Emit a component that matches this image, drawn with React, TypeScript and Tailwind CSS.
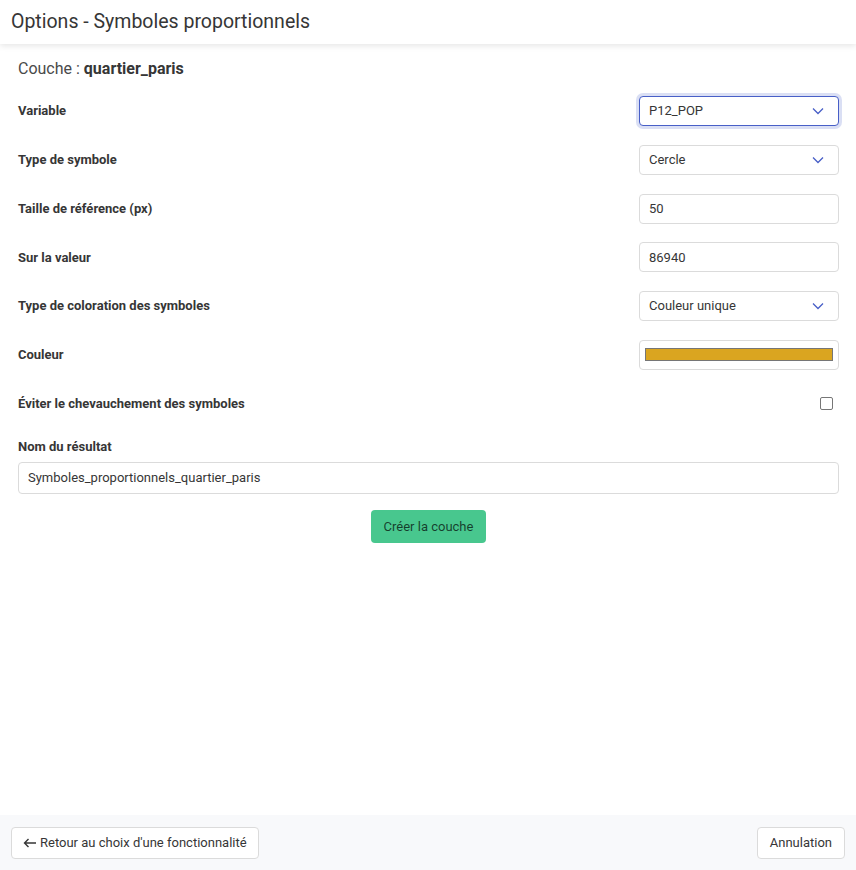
const font = { fontFamily: "Roboto, 'Liberation Sans', sans-serif" };

const Chevron = () => (
  <svg width="12" height="8" viewBox="0 0 12 8" className="absolute right-[14px] top-1/2 -translate-y-1/2">
    <path d="M1 1.5 L6 6.5 L11 1.5" fill="none" stroke="#485fc7" strokeWidth="1.3" />
  </svg>
);

const Select = ({ value, focused }: { value: string; focused?: boolean }) => (
  <div
    className={
      focused
        ? "relative w-[200px] h-[30px] rounded-[4px] border border-[#485fc7] bg-white pl-[9px] flex items-center text-[13px] text-[#363636] ring-[3px] ring-[#485fc7]/20"
        : "relative w-[200px] h-[30px] rounded-[4px] border border-[#dbdbdb] bg-white pl-[9px] flex items-center text-[13px] text-[#363636]"
    }
  >
    {value}
    <Chevron />
  </div>
);

const Input = ({ value }: { value: string }) => (
  <div className="w-[200px] h-[30px] rounded-[4px] border border-[#dbdbdb] bg-white pl-[9px] flex items-center text-[13px] text-[#363636]">
    {value}
  </div>
);

const Row = ({ label, children }: { label: string; children: React.ReactNode }) => (
  <div className="flex items-center justify-between h-[30px] mb-[18.8px]">
    <span className="text-[13px] font-bold text-[#363636]">{label}</span>
    {children}
  </div>
);

export default function App() {
  return (
    <div style={font} className="w-[856px] h-[870px] flex flex-col bg-white text-[#363636]">
      <div className="h-[44px] flex items-center px-[11px] shadow-[0_2px_6px_rgba(0,0,0,0.1)] relative z-10">
        <h1 className="text-[19.5px] text-[#363636]">Options - Symboles proportionnels</h1>
      </div>
      <div className="flex-1 pl-[18px] pr-[17px] pt-[13px]">
        <p className="text-[16px] mb-[15px] text-[#4a4a4a]">
          Couche : <b className="text-[#363636]">quartier_paris</b>
        </p>
        <Row label="Variable">
          <Select value="P12_POP" focused />
        </Row>
        <Row label="Type de symbole">
          <Select value="Cercle" />
        </Row>
        <Row label="Taille de référence (px)">
          <Input value="50" />
        </Row>
        <Row label="Sur la valeur">
          <Input value="86940" />
        </Row>
        <Row label="Type de coloration des symboles">
          <Select value="Couleur unique" />
        </Row>
        <Row label="Couleur">
          <div className="w-[200px] h-[30px] rounded-[4px] border border-[#dbdbdb] bg-white px-[5px] flex items-center">
            <div className="w-full h-[13px] bg-[#daa520] border border-[#767676]" />
          </div>
        </Row>
        <Row label="Éviter le chevauchement des symboles">
          <div className="w-[13px] h-[13px] rounded-[2px] border border-[#767676] bg-white mr-[6px]" />
        </Row>
        <div className="text-[13px] font-bold mt-[-1px] mb-[6px]">Nom du résultat</div>
        <div className="h-[32px] rounded-[4px] border border-[#dbdbdb] bg-white pl-[9px] flex items-center text-[13px]">
          Symboles_proportionnels_quartier_paris
        </div>
        <div className="flex justify-center mt-[16px]">
          <button className="h-[33px] px-[13px] rounded-[4px] bg-[#48c78e] text-[13px] text-black/70">
            Créer la couche
          </button>
        </div>
      </div>
      <div className="h-[55px] bg-[#f8f9fb] flex items-center justify-between px-[11px]">
        <button className="h-[32px] px-[11px] rounded-[4px] border border-[#dbdbdb] bg-white text-[13px] flex items-center gap-[3px]">
          <svg width="14" height="10" viewBox="0 0 14 10">
            <path d="M13 5 H1.5 M5.5 1 L1.5 5 L5.5 9" fill="none" stroke="#363636" strokeWidth="1.4" />
          </svg>
          Retour au choix d'une fonctionnalité
        </button>
        <button className="h-[32px] px-[12px] rounded-[4px] border border-[#dbdbdb] bg-white text-[13px]">
          Annulation
        </button>
      </div>
    </div>
  );
}
